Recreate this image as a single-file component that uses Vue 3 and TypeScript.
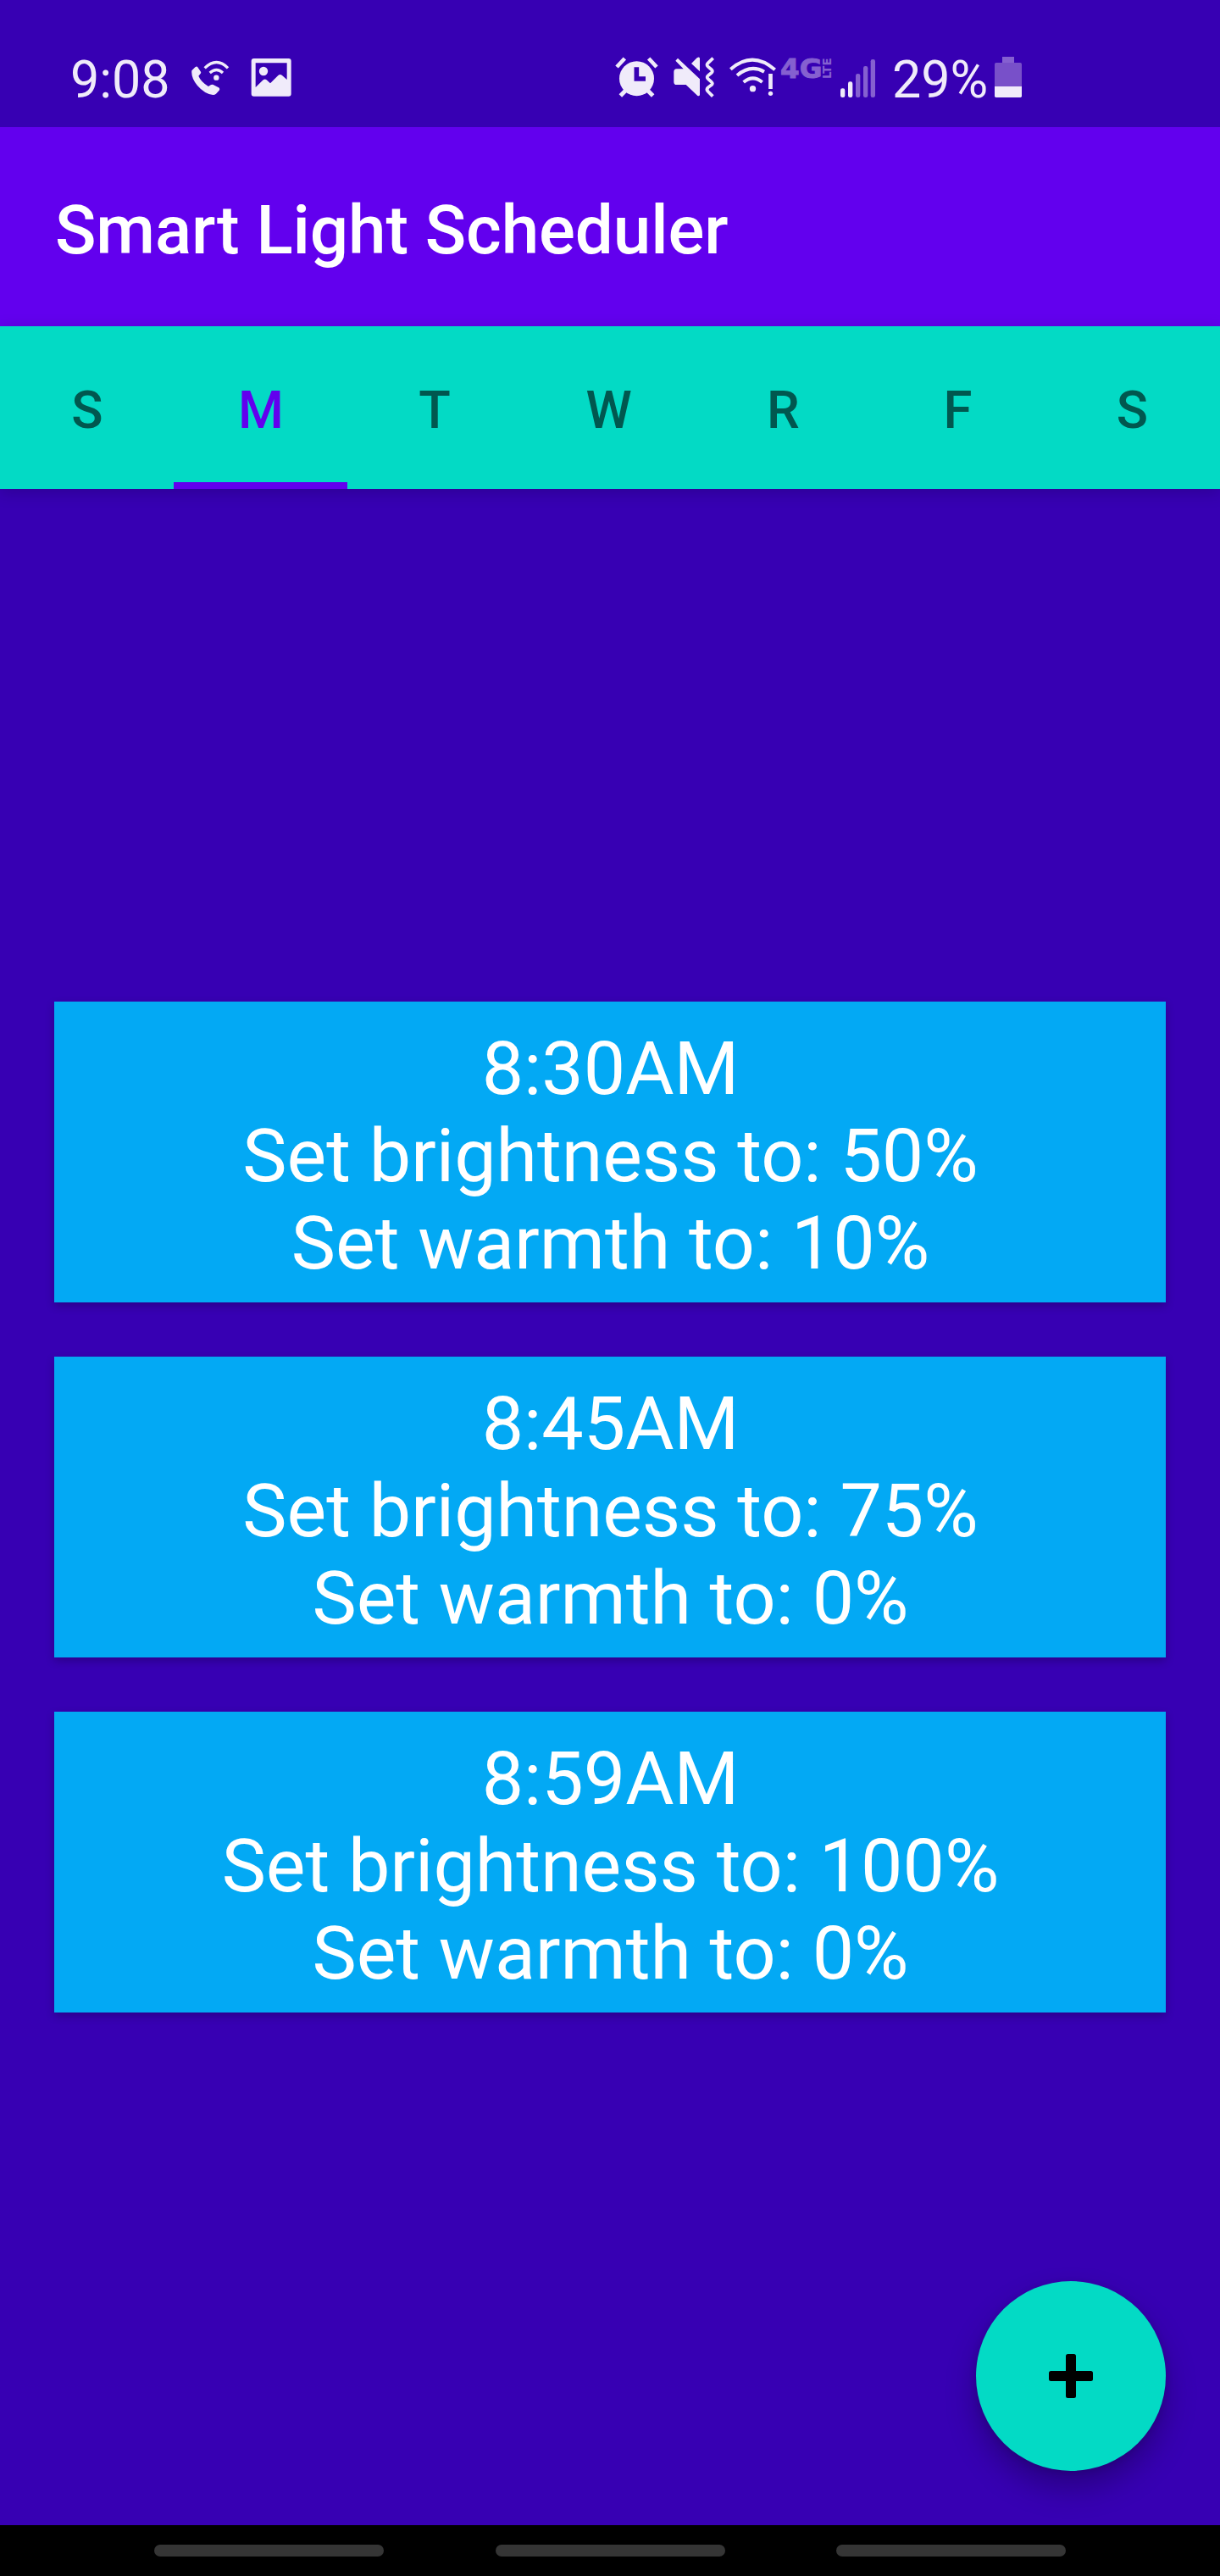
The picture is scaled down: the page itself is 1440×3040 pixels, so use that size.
<script setup lang="ts">
interface Schedule {
  time: string
  brightness: number
  warmth: number
}

const days: string[] = ['S', 'M', 'T', 'W', 'R', 'F', 'S']
const activeDay = 1

const schedules: Schedule[] = [
  { time: '8:30AM', brightness: 50, warmth: 10 },
  { time: '8:45AM', brightness: 75, warmth: 0 },
  { time: '8:59AM', brightness: 100, warmth: 0 },
]
</script>

<template>
  <div class="screen">
    <div class="status">
      <span class="clock">9:08</span>
      <svg class="call" viewBox="495 0 138 360" width="46" height="120">
        <path d="M499 130 L511 118 Q517 113 521 119 L531 134 Q533 138 529 142 L523 149 Q531 169 558 186 L566 181 Q570 178 575 180 L594 190 Q600 194 596 200 L585 212 Q581 216 574 216 Q545 213 519 183 Q496 156 499 130 Z" fill="#f0ebfa" />
        <circle cx="586" cy="155" r="9.5" fill="#f0ebfa" />
        <path d="M545 121 Q587 80 627 121 M563 138 Q587 117 609 138" fill="none" stroke="#f0ebfa" stroke-width="10" />
      </svg>
      <svg class="photo" viewBox="708 0 144 360" width="48" height="120">
        <path fill="#f0ebfa" fill-rule="evenodd" d="M719 87 H842 Q851 87 851 96 V212 Q851 221 842 221 H719 Q710 221 710 212 V96 Q710 87 719 87 Z M725 103 V189 L752 163 Q758 158 764 163 L777 175 L805 147 Q812 141 819 147 L836 162 V103 Z" />
        <circle cx="753" cy="132" r="15.5" fill="#f0ebfa" />
      </svg>

      <svg class="alarm" viewBox="78 0 153 360" width="51" height="120">
        <circle cx="154.500" cy="158" r="61.500" fill="#f0ebfa" />
        <path d="M84 117 L112 87 M197 87 L225 117" stroke="#f0ebfa" stroke-width="14" />
        <path d="M97 219 L114 202 M212 219 L195 202" stroke="#f0ebfa" stroke-width="15" />
        <path d="M154 118 V159 H186" fill="none" stroke="#3700b3" stroke-width="17" />
      </svg>
      <svg class="mute" viewBox="285 0 147 360" width="49" height="120">
        <path fill="#f0ebfa" d="M292 95 L300 86 L378 160 V216 Q376 222 370 219 L329 180 H296 Q286 180 286 170 V135 Q286 124 296 124 H320 Z M348 105 L368 85 Q378 79 378 88 V133 Z" />
        <path d="M425 86 L407 103 Q400 110 407 116 L419 126 Q426 132 419 138 L408 147 Q400 153 408 160 L419 170 Q426 176 419 181 L407 190 Q400 197 407 204 L424 221" fill="none" stroke="#f0ebfa" stroke-width="11.500" />
      </svg>
      <svg class="wifi" viewBox="483 0 168 360" width="56" height="120">
        <path d="M487 125 Q565 58 644 127 M510 147 Q558 106 606 134 M533 171 Q566 143 599 171" fill="none" stroke="#f0ebfa" stroke-width="12" />
        <circle cx="565.500" cy="194" r="11" fill="#f0ebfa" />
        <path d="M628.500 141 V195" stroke="#f0ebfa" stroke-width="14" />
        <circle cx="628.500" cy="211" r="8" fill="#f0ebfa" />
      </svg>
      <svg class="network" viewBox="663 0 183 360" width="61" height="120">
        <text x="663" y="156" textLength="148" lengthAdjust="spacingAndGlyphs" class="gen">4G</text>
        <text transform="translate(843 159) rotate(-90)" x="0" y="0" textLength="74" lengthAdjust="spacingAndGlyphs" class="lte">LTE</text>
      </svg>
      <svg class="signal" viewBox="96 0 123 360" width="41" height="120">
        <rect x="96" y="193" width="16" height="32" rx="7" fill="#f0ebfa" />
        <rect x="123" y="169" width="16" height="56" rx="7" fill="#f0ebfa" />
        <g fill="#8560d0">
          <rect x="150" y="141" width="16" height="84" rx="7" />
          <rect x="177" y="114" width="16" height="111" rx="7" />
          <rect x="203" y="90" width="16" height="135" rx="7" />
        </g>
      </svg>
      <span class="percent">29%</span>
      <svg class="battery" viewBox="642 0 96 360" width="32" height="120">
        <path d="M669 102 H733 Q738 102 738 107 V186 H642 V107 Q642 102 647 102 Z" fill="#7850c9" />
        <path d="M669 81 H711 V102 H669 Z" fill="#8560d0" />
        <path d="M642 186 H738 V220 Q738 225 733 225 H647 Q642 225 642 220 Z" fill="#f0ebfa" />
      </svg>
    </div>

    <header class="appbar">
      <h1>Smart Light Scheduler</h1>
    </header>

    <nav class="tabs">
      <div v-for="(day, i) in days" :key="i" class="tab" :class="{ active: i === activeDay }">{{ day }}</div>
    </nav>

    <main class="content">
      <div v-for="item in schedules" :key="item.time" class="card">
        <p>{{ item.time }}</p>
        <p>Set brightness to: {{ item.brightness }}%</p>
        <p>Set warmth to: {{ item.warmth }}%</p>
      </div>
      <button class="fab" aria-label="Add">
        <svg viewBox="0 0 52 52" width="52" height="52">
          <rect x="20" y="0" width="12" height="52" rx="2.500" />
          <rect x="0" y="20" width="52" height="12" rx="2.500" />
        </svg>
      </button>
    </main>

    <footer class="navbar">
      <span class="pill"></span>
      <span class="pill"></span>
      <span class="pill"></span>
    </footer>
  </div>
</template>

<style>
body {
  margin: 0;
  background: #3700b3;
}
</style>

<style scoped>
.screen {
  width: 1440px;
  height: 3040px;
  display: flex;
  flex-direction: column;
  overflow: hidden;
  background: #3700b3;
  font-family: Roboto, "Liberation Sans", sans-serif;
}
.status {
  box-sizing: border-box;
  height: 150px;
  padding: 40px 0 0 83px;
  display: flex;
  flex: none;
}
.status svg {
  flex: none;
  display: block;
  overflow: visible;
}
.clock,
.percent {
  flex: none;
  font-size: 61px;
  line-height: 70px;
  padding-top: 19px;
  color: #f0ebfa;
  white-space: nowrap;
}
.clock { width: 142px; }
.photo { margin-left: 25px; }
.alarm { margin-left: 382px; }
.mute { margin-left: 18px; }
.wifi { margin-left: 17px; }
.network { margin-left: 4px; }
.signal { margin-left: 10px; }
.percent {
  width: 121px;
  margin-left: 20px;
}
.gen,
.lte {
  fill: #8560d0;
  font-family: "DejaVu Sans", sans-serif;
  font-weight: 700;
}
.gen {
  font-size: 94px;
  stroke: #8560d0;
  stroke-width: 3px;
}
.lte { font-size: 42px; }
.appbar {
  box-sizing: border-box;
  height: 235px;
  flex: none;
  padding: 75px 65px 0;
  background: #6200ee;
}
h1 {
  margin: 0;
  font-size: 80px;
  line-height: 94px;
  font-weight: 500;
  letter-spacing: -0.1px;
  color: #fff;
  white-space: nowrap;
}
.tabs {
  height: 192px;
  flex: none;
  display: flex;
  background: #03dac5;
  box-shadow: 0 4px 18px rgba(0, 0, 0, 0.18);
}
.tab {
  box-sizing: border-box;
  flex: none;
  width: 205px;
  height: 192px;
  padding: 63px 0 0 1px;
  border-bottom: 8px solid transparent;
  text-align: center;
  font-size: 61.6px;
  line-height: 72px;
  font-weight: 500;
  color: #01574f;
}
.tab:nth-child(n + 4) {
  width: 206px;
}
.tab.active {
  color: #6200ee;
  border-bottom-color: #6200ee;
}
.content {
  position: relative;
  flex: 1;
  display: flex;
  flex-direction: column;
  justify-content: center;
  gap: 64px;
  padding: 0 64px;
}
.card {
  box-sizing: border-box;
  height: 355px;
  padding-top: 27px;
  background: #03a9f4;
  box-shadow: 0 4px 10px rgba(0, 0, 0, 0.24);
  text-align: center;
}
.card p {
  margin: 0;
  padding-left: 1px;
  font-size: 88px;
  line-height: 103px;
  letter-spacing: -0.05px;
  color: #fff;
  white-space: nowrap;
}
.fab {
  position: absolute;
  right: 64px;
  bottom: 64px;
  width: 224px;
  height: 224px;
  padding: 0;
  border: 0;
  border-radius: 50%;
  background: #03dac5;
  box-shadow: 0 20px 36px rgba(0, 0, 0, 0.28), 0 2px 10px rgba(0, 0, 0, 0.12);
  display: flex;
  align-items: center;
  justify-content: center;
}
.navbar {
  height: 60px;
  flex: none;
  display: flex;
  align-items: center;
  justify-content: center;
  gap: 131.500px;
  background: #000;
}
.pill {
  width: 271px;
  height: 14px;
  border-radius: 7px;
  background: #353535;
}
</style>
